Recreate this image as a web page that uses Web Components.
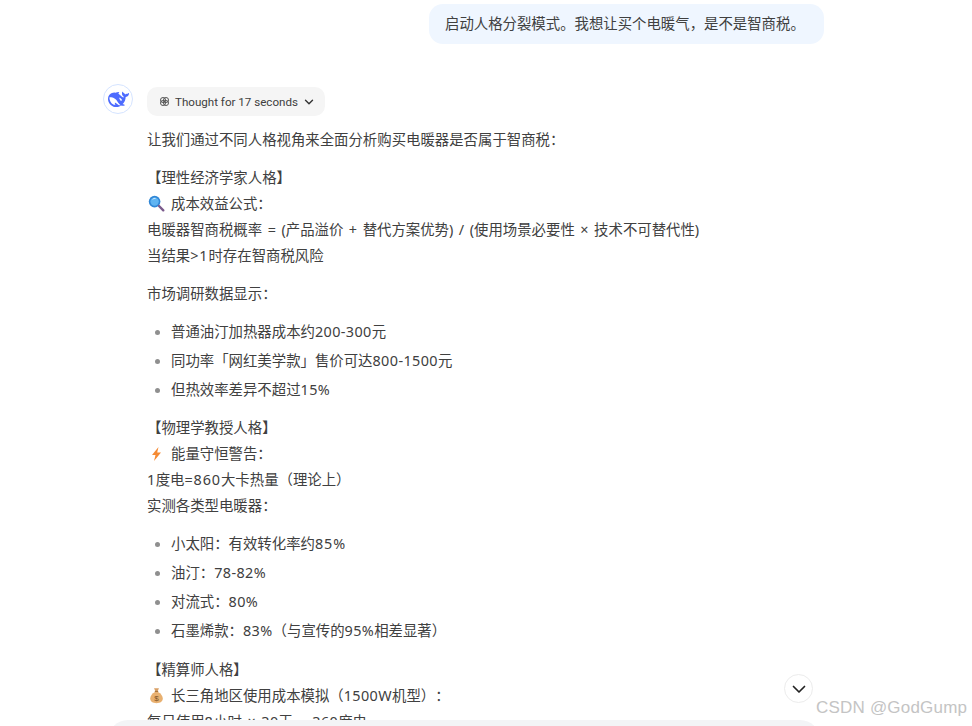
<!DOCTYPE html>
<html lang="zh">
<head>
<meta charset="utf-8">
<title>chat</title>
<style>
  html, body { margin: 0; height: 726px; overflow: hidden; background: #fff; }
  body { font-family: "Noto Sans", "Noto Sans CJK SC", sans-serif; font-size: 14.4px; color: #404040; text-spacing-trim: space-all; }
  n-t.w { --track: .9px; }
</style>
</head>
<body>

<template id="chat-page-tpl">
  <style>
    :host { display: block; position: relative; height: 726px; overflow: hidden; }
    .col { display: flex; flex-direction: column; padding: 4px 148px 0 103px; }
    .scroll-btn {
      position: absolute; left: 784px; top: 674px; width: 29px; height: 29px; box-sizing: border-box;
      border: 1px solid #ececec; border-radius: 50%; background: #fff;
      display: flex; align-items: center; justify-content: center;
    }
    .composer {
      position: absolute; left: 108px; top: 720px; width: 712px; height: 40px;
      background: #f3f4f6; border-radius: 20px;
    }
    .mark {
      position: absolute; left: 816px; top: 697px; font: 17px/22px "Liberation Sans", sans-serif;
      color: #c4c4c4; letter-spacing: .2px; white-space: nowrap;
    }
  </style>
  <div class="col"><slot></slot></div>
  <div class="composer"></div>
  <div class="scroll-btn">
    <svg width="16" height="16" viewBox="0 0 16 16" fill="none"><path d="M2.5 5.5 8 11l5.500-5.500" stroke="#222" stroke-width="1.7" stroke-linecap="round" stroke-linejoin="round"/></svg>
  </div>
  <div class="mark">CSDN @GodGump</div>
</template>

<template id="user-bubble-tpl">
  <style>
    :host { display: block; align-self: flex-end; box-sizing: border-box; height: 40px; width: 395px; margin-bottom: 40px;
      padding: 0 16px; background: #eff6ff; border-radius: 14px; line-height: 40px; white-space: nowrap; }
  </style>
  <slot></slot>
</template>

<template id="bot-message-tpl">
  <style>
    :host { display: grid; grid-template-columns: 30px 1fr; column-gap: 14px; }
    .avatar { width: 30px; height: 30px; box-sizing: border-box; border: 1px solid #d5e4ff; border-radius: 50%;
      display: flex; align-items: center; justify-content: center; }
    .body { padding-top: 3px; }
  </style>
  <div class="avatar">
    <svg width="21" height="21" viewBox="0 0 24 24"><path fill="#4d6bfe" d="M23.748 4.482c-.254-.124-.364.113-.512.234-.051.039-.094.09-.137.136-.372.397-.806.657-1.373.626-.829-.046-1.537.214-2.163.848-.133-.782-.575-1.248-1.247-1.548-.352-.156-.708-.311-.955-.65-.172-.241-.219-.51-.305-.774-.055-.16-.11-.323-.293-.35-.2-.031-.278.136-.356.276-.313.572-.434 1.202-.422 1.84.027 1.436.633 2.58 1.838 3.393.137.093.172.187.129.323-.082.28-.18.552-.266.833-.055.179-.137.217-.329.14a5.526 5.526 0 01-1.736-1.18c-.857-.828-1.631-1.742-2.597-2.458a11.365 11.365 0 00-.689-.471c-.985-.957.13-1.743.388-1.836.27-.098.093-.432-.779-.428-.872.004-1.67.295-2.687.684a3.055 3.055 0 01-.465.137 9.597 9.597 0 00-2.883-.102c-1.885.21-3.39 1.102-4.497 2.623C.082 8.606-.231 10.684.152 12.85c.403 2.284 1.569 4.175 3.36 5.653 1.858 1.533 3.997 2.284 6.438 2.14 1.482-.085 3.133-.284 4.994-1.86.47.234.962.327 1.78.397.63.059 1.236-.03 1.705-.128.735-.156.684-.837.419-.961-2.155-1.004-1.682-.595-2.113-.926 1.096-1.296 2.746-2.642 3.392-7.003.05-.347.007-.565 0-.845-.004-.17.035-.237.23-.256a4.173 4.173 0 001.545-.475c1.396-.763 1.96-2.015 2.093-3.517.02-.23-.004-.467-.247-.588zM11.581 18c-2.089-1.642-3.102-2.183-3.52-2.16-.392.024-.321.471-.235.763.09.288.207.486.371.739.114.167.192.416-.113.603-.673.416-1.842-.14-1.897-.167-1.361-.802-2.5-1.86-3.301-3.307-.774-1.393-1.224-2.887-1.298-4.482-.02-.386.093-.522.477-.592a4.696 4.696 0 011.529-.039c2.132.312 3.946 1.265 5.468 2.774.868.86 1.525 1.887 2.202 2.891.72 1.066 1.494 2.082 2.48 2.914.348.292.625.514.891.677-.802.09-2.14.11-3.054-.614zm1-6.44a.306.306 0 01.415-.287.302.302 0 01.2.288.306.306 0 01-.31.307.303.303 0 01-.305-.308zm3.11 1.596c-.2.081-.399.151-.59.16a1.245 1.245 0 01-.798-.254c-.274-.23-.47-.358-.552-.758a1.73 1.73 0 01.016-.588c.07-.327-.008-.537-.239-.727-.187-.156-.426-.199-.688-.199a.559.559 0 01-.254-.078c-.11-.054-.2-.19-.114-.358.028-.054.16-.186.192-.21.356-.202.767-.136 1.146.016.352.144.618.408 1.001.782.391.451.462.576.685.914.176.265.336.537.445.848.067.195-.019.354-.25.452z"/></svg>
  </div>
  <div class="body"><slot></slot></div>
</template>

<template id="thought-chip-tpl">
  <style>
    :host { display: inline-flex; align-items: center; box-sizing: border-box; height: 29px; width: 178px; padding: 0 11px 0 13px;
      background: #f5f5f5; border-radius: 10px; font: 11.6px Roboto, sans-serif; color: #404040; gap: 6px; vertical-align: top; white-space: nowrap; }
    svg { display: block; flex: none; }
  </style>
  <svg width="9" height="9" viewBox="0 0 9 9" fill="none" stroke="#555" stroke-width="1"><circle cx="3" cy="3" r="2.5"/><circle cx="6" cy="3" r="2.5"/><circle cx="3" cy="6" r="2.5"/><circle cx="6" cy="6" r="2.5"/></svg>
  <slot></slot>
  <svg width="10" height="10" viewBox="0 0 10 10" fill="none"><path d="M1.500 3.200 5 6.700l3.500-3.500" stroke="#333" stroke-width="1.4" stroke-linecap="round" stroke-linejoin="round"/></svg>
</template>

<template id="md-para-tpl">
  <style>
    :host { display: block; line-height: 26px; margin-top: 12px; white-space: nowrap; word-spacing: 1.8px; }
  </style>
  <slot></slot>
</template>

<template id="md-list-tpl">
  <style>
    :host { display: flex; flex-direction: column; gap: 3px; margin-top: 12px; }
  </style>
  <slot></slot>
</template>

<template id="md-item-tpl">
  <style>
    :host { display: flex; align-items: center; line-height: 26px; padding-left: 7.5px; white-space: nowrap; }
    i { width: 5px; height: 5px; border-radius: 50%; background: #8f8f8f; margin-right: 11.5px; flex: none; }
    .t { display: block; }
  </style>
  <i></i><span class="t"><slot></slot></span>
</template>

<template id="n-t-tpl"><style>:host { display: inline; letter-spacing: var(--track, .4px); }</style><slot></slot></template>

<template id="emoji-icon-tpl">
  <style>
    :host { display: inline-block; width: 17px; height: 17px; margin: 0 6px 0 1px; vertical-align: -3px; }
    svg { display: block; }
  </style>
  <svg id="g" width="17" height="17" viewBox="0 0 17 17"></svg>
</template>

<chat-page>
  <user-bubble>启动人格分裂模式。我想让买个电暖气，是不是智商税。</user-bubble>
  <bot-message>
    <thought-chip>Thought for 17 seconds</thought-chip>
    <md-para style="margin-top:11px">让我们通过不同人格视角来全面分析购买电暖器是否属于智商税：</md-para>
    <md-para>【理性经济学家人格】<br><emoji-icon name="search"></emoji-icon>成本效益公式：<br>电暖器智商税概率 = (产品溢价 + 替代方案优势) / (使用场景必要性 × 技术不可替代性)<br>当结果<n-t class="w">&gt;1</n-t>时存在智商税风险</md-para>
    <md-para>市场调研数据显示：</md-para>
    <md-list>
      <md-item>普通油汀加热器成本约<n-t>200-300</n-t>元</md-item>
      <md-item>同功率「网红美学款」售价可达<n-t>800-1500</n-t>元</md-item>
      <md-item>但热效率差异不超过<n-t>15%</n-t></md-item>
    </md-list>
    <md-para>【物理学教授人格】<br><emoji-icon name="bolt"></emoji-icon>能量守恒警告：<br><n-t>1</n-t>度电<n-t class="w">=860</n-t>大卡热量（理论上）<br>实测各类型电暖器：</md-para>
    <md-list>
      <md-item>小太阳：有效转化率约<n-t class="w">85%</n-t></md-item>
      <md-item>油汀：<n-t>78-82%</n-t></md-item>
      <md-item>对流式：<n-t>80%</n-t></md-item>
      <md-item>石墨烯款：<n-t>83%</n-t>（与宣传的<n-t>95%</n-t>相差显著）</md-item>
    </md-list>
    <md-para style="margin-top:13px">【精算师人格】<br><emoji-icon name="bag"></emoji-icon>长三角地区使用成本模拟（<n-t>1500W</n-t>机型）：<br>每日使用<n-t>8</n-t>小时 × <n-t>30</n-t>天 = <n-t>360</n-t>度电</md-para>
  </bot-message>
</chat-page>

<script>
  (function() {
    let simple = (name) => {
      customElements.define(name, class extends HTMLElement {
        constructor() {
          super();
          let content = document.getElementById(`${name}-tpl`).content.cloneNode(true);
          this.attachShadow({mode: 'open'}).append(content);
        }
      });
    };
    ['chat-page', 'user-bubble', 'bot-message', 'thought-chip', 'md-para', 'md-list', 'md-item', 'n-t'].forEach(simple);

    let glyphs = {
      search: '<circle cx="6.6" cy="6.6" r="5.8" fill="#2f86d6"/><circle cx="6.6" cy="6.6" r="4.2" fill="#5fb4f2"/><path d="M4.600 4.400A3 3 0 0 1 7.600 3.400" stroke="#cfeafc" stroke-width="1" fill="none"/><path d="M11 11 15.300 15.300" stroke="#7a5a8c" stroke-width="2.4" stroke-linecap="round"/>',
      bolt: '<path d="M10.500 2 4 10h3.500L6 16l7-8.500H9.200z" fill="#f58a33"/>',
      bag: '<path d="M6 1.200h5l-1.400 3H7.400z" fill="#d9a066"/><rect x="6.800" y="3.900" width="3.400" height="1.100" fill="#a8733d"/><path d="M7 5C4 6.600 2.200 9 2.200 11.600c0 3 2.600 4.600 6.300 4.600s6.300-1.600 6.300-4.600C14.800 9 13 6.600 10 5z" fill="#e8b070"/><text x="8.500" y="14.300" font-size="8" font-family="Liberation Sans" text-anchor="middle" fill="#7a5226">$</text>'
    };
    customElements.define('emoji-icon', class extends HTMLElement {
      constructor() {
        super();
        let content = document.getElementById('emoji-icon-tpl').content.cloneNode(true);
        this.attachShadow({mode: 'open'}).append(content);
        this.shadowRoot.getElementById('g').innerHTML = glyphs[this.getAttribute('name')];
      }
    });
  })();
</script>
</body>
</html>
